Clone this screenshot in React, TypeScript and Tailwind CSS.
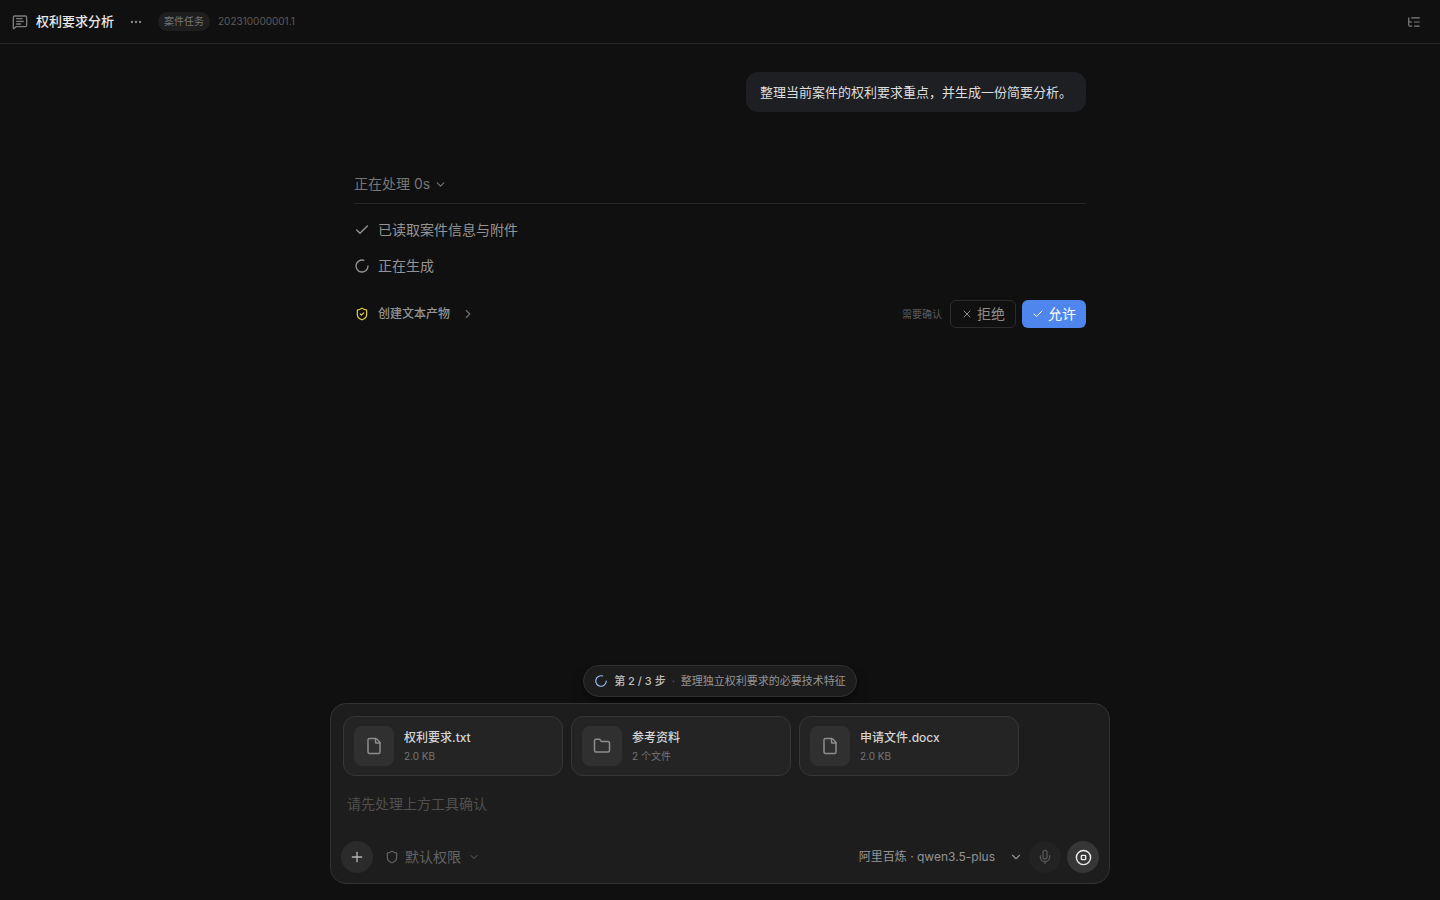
import React from "react";
import {
  Check,
  ChevronDown,
  ChevronRight,
  CircleStop,
  Ellipsis,
  File,
  Folder,
  ListTree,
  LoaderCircle,
  MessageSquareText,
  Mic,
  Plus,
  Shield,
  ShieldCheck,
  X,
} from "lucide-react";

interface Attachment {
  id: string;
  name: string;
  meta: string;
  kind: "file" | "folder";
}

const attachments: Attachment[] = [
  { id: "claims", name: "权利要求.txt", meta: "2.0 KB", kind: "file" },
  { id: "refs", name: "参考资料", meta: "2 个文件", kind: "folder" },
  { id: "application", name: "申请文件.docx", meta: "2.0 KB", kind: "file" },
];

const Header: React.FC = () => (
  <header className="flex h-11 shrink-0 items-center border-b border-[#292929] px-3">
    <MessageSquareText size={16} className="text-[#7c7c7c]" />
    <h1 className="ml-2 text-[13px] font-medium text-[#e8e8e8]">权利要求分析</h1>
    <button type="button" aria-label="更多" className="ml-2 flex h-7 w-7 items-center justify-center text-[#8c8c8c]">
      <Ellipsis size={14} />
    </button>
    <span className="ml-2 rounded-full bg-[#1e1e1e] px-1.5 py-0.5 text-[10px] leading-[15px] text-[#777777]">
      案件任务
    </span>
    <span className="ml-2 text-[10px] text-[#5c5c5c]">202310000001.1</span>
    <button type="button" aria-label="目录" className="ml-auto flex h-7 w-7 items-center justify-center text-[#808080]">
      <ListTree size={14} />
    </button>
  </header>
);

const Thread: React.FC = () => (
  <div className="mx-auto w-full max-w-[780px] px-6 pt-7">
    <div className="flex justify-end">
      <p className="rounded-xl bg-[#1d1f23] px-3.5 py-2.5 text-[13px] leading-5 text-[#dedede]">
        整理当前案件的权利要求重点，并生成一份简要分析。
      </p>
    </div>

    <div className="mt-[60px] border-b border-[#272727] pb-[7px]">
      <button type="button" className="flex h-6 items-center gap-1 text-sm text-[#767676]">
        正在处理 0s
        <ChevronDown size={13} />
      </button>
    </div>

    <ul className="mt-3.5 flex flex-col gap-3 text-sm leading-6 text-[#949494]">
      <li className="flex items-center gap-2">
        <Check size={16} />
        已读取案件信息与附件
      </li>
      <li className="flex items-center gap-2">
        <LoaderCircle size={16} />
        正在生成
      </li>
    </ul>

    <div className="mt-[22px] flex items-center">
      <button type="button" className="flex items-center text-xs font-medium text-[#949494]">
        <span className="flex w-6 pl-px">
          <ShieldCheck size={14} className="text-[#e8cf4a]" />
        </span>
        创建文本产物
        <ChevronRight size={14} className="ml-[11px] text-[#707070]" />
      </button>
      <span className="ml-auto text-[10px] text-[#5c5c5c]">需要确认</span>
      <button
        type="button"
        className="ml-2 flex h-7 items-center gap-1 rounded-md border border-[#2c2c2c] px-2.5 text-sm text-[#8c8c8c]"
      >
        <X size={12} />
        拒绝
      </button>
      <button
        type="button"
        className="ml-1.5 flex h-7 items-center gap-1 rounded-md bg-[#4f86ee] px-2.5 text-sm text-white"
      >
        <Check size={12} />
        允许
      </button>
    </div>
  </div>
);

const StepPill: React.FC = () => (
  <div className="mb-1.5 flex h-8 items-center rounded-full border border-[#303030] bg-[#1d1d1d] px-2.5 text-[11px] shadow-lg shadow-black/40">
    <LoaderCircle size={14} className="text-[#9dbcf5]" />
    <span className="ml-1.5 font-medium text-[#c0c0c0]">第 2 / 3 步</span>
    <span className="mx-1.5 text-[#555555]">·</span>
    <span className="text-[#949494]">整理独立权利要求的必要技术特征</span>
  </div>
);

const AttachmentCard: React.FC<{ item: Attachment }> = ({ item }) => (
  <li className="flex h-[60px] w-[220px] items-center gap-2.5 rounded-xl border border-[#363636] bg-[#242424] px-2.5">
    <span className="flex h-10 w-10 shrink-0 items-center justify-center rounded-lg bg-[#303030] text-[#8c8c8c]">
      {item.kind === "folder" ? <Folder size={18} /> : <File size={18} />}
    </span>
    <div className="min-w-0">
      <p className="truncate text-xs leading-5 font-medium text-[#d4d4d4]">{item.name}</p>
      <p className="text-[10px] leading-4 text-[#757575]">{item.meta}</p>
    </div>
  </li>
);

const Composer: React.FC = () => (
  <form className="w-full rounded-2xl border border-[#333333] bg-[#1d1d1d]">
    <ul className="flex flex-wrap gap-2 px-3 pt-3">
      {attachments.map((item) => (
        <AttachmentCard key={item.id} item={item} />
      ))}
    </ul>
    <textarea
      aria-label="消息"
      rows={2}
      placeholder="请先处理上方工具确认"
      className="mt-4 block h-[49px] w-full resize-none bg-transparent px-4 text-sm leading-6 text-[#dcdcdc] outline-none placeholder:text-[#505050]"
    />
    <div className="flex items-center px-2.5 pb-2.5">
      <button
        type="button"
        aria-label="添加"
        className="flex h-8 w-8 items-center justify-center rounded-full bg-[#2b2b2b] text-[#b4b4b4]"
      >
        <Plus size={16} />
      </button>
      <button type="button" className="ml-3 flex items-center text-sm text-[#646464]">
        <Shield size={14} />
        <span className="ml-1.5">默认权限</span>
        <ChevronDown size={12} className="ml-[7px]" />
      </button>
      <button type="button" className="ml-auto flex items-center text-xs text-[#949494]">
        阿里百炼 · qwen3.5-plus
        <ChevronDown size={14} className="ml-3.5" />
      </button>
      <button
        type="button"
        aria-label="语音输入"
        className="ml-1.5 flex h-8 w-8 items-center justify-center rounded-full bg-[#222222] text-[#565656]"
      >
        <Mic size={16} />
      </button>
      <button
        type="button"
        aria-label="停止"
        className="ml-1.5 flex h-8 w-8 items-center justify-center rounded-full bg-[#363636] text-[#ededed]"
      >
        <CircleStop size={17} />
      </button>
    </div>
  </form>
);

export default function App() {
  return (
    <div className="flex min-h-screen flex-col bg-[#101010] font-['Inter','Noto_Sans_CJK_SC',sans-serif]">
      <Header />
      <main className="flex flex-1 flex-col">
        <Thread />
        <div className="mx-auto mt-auto flex w-full max-w-[780px] flex-col items-center pb-4">
          <StepPill />
          <Composer />
        </div>
      </main>
    </div>
  );
}
